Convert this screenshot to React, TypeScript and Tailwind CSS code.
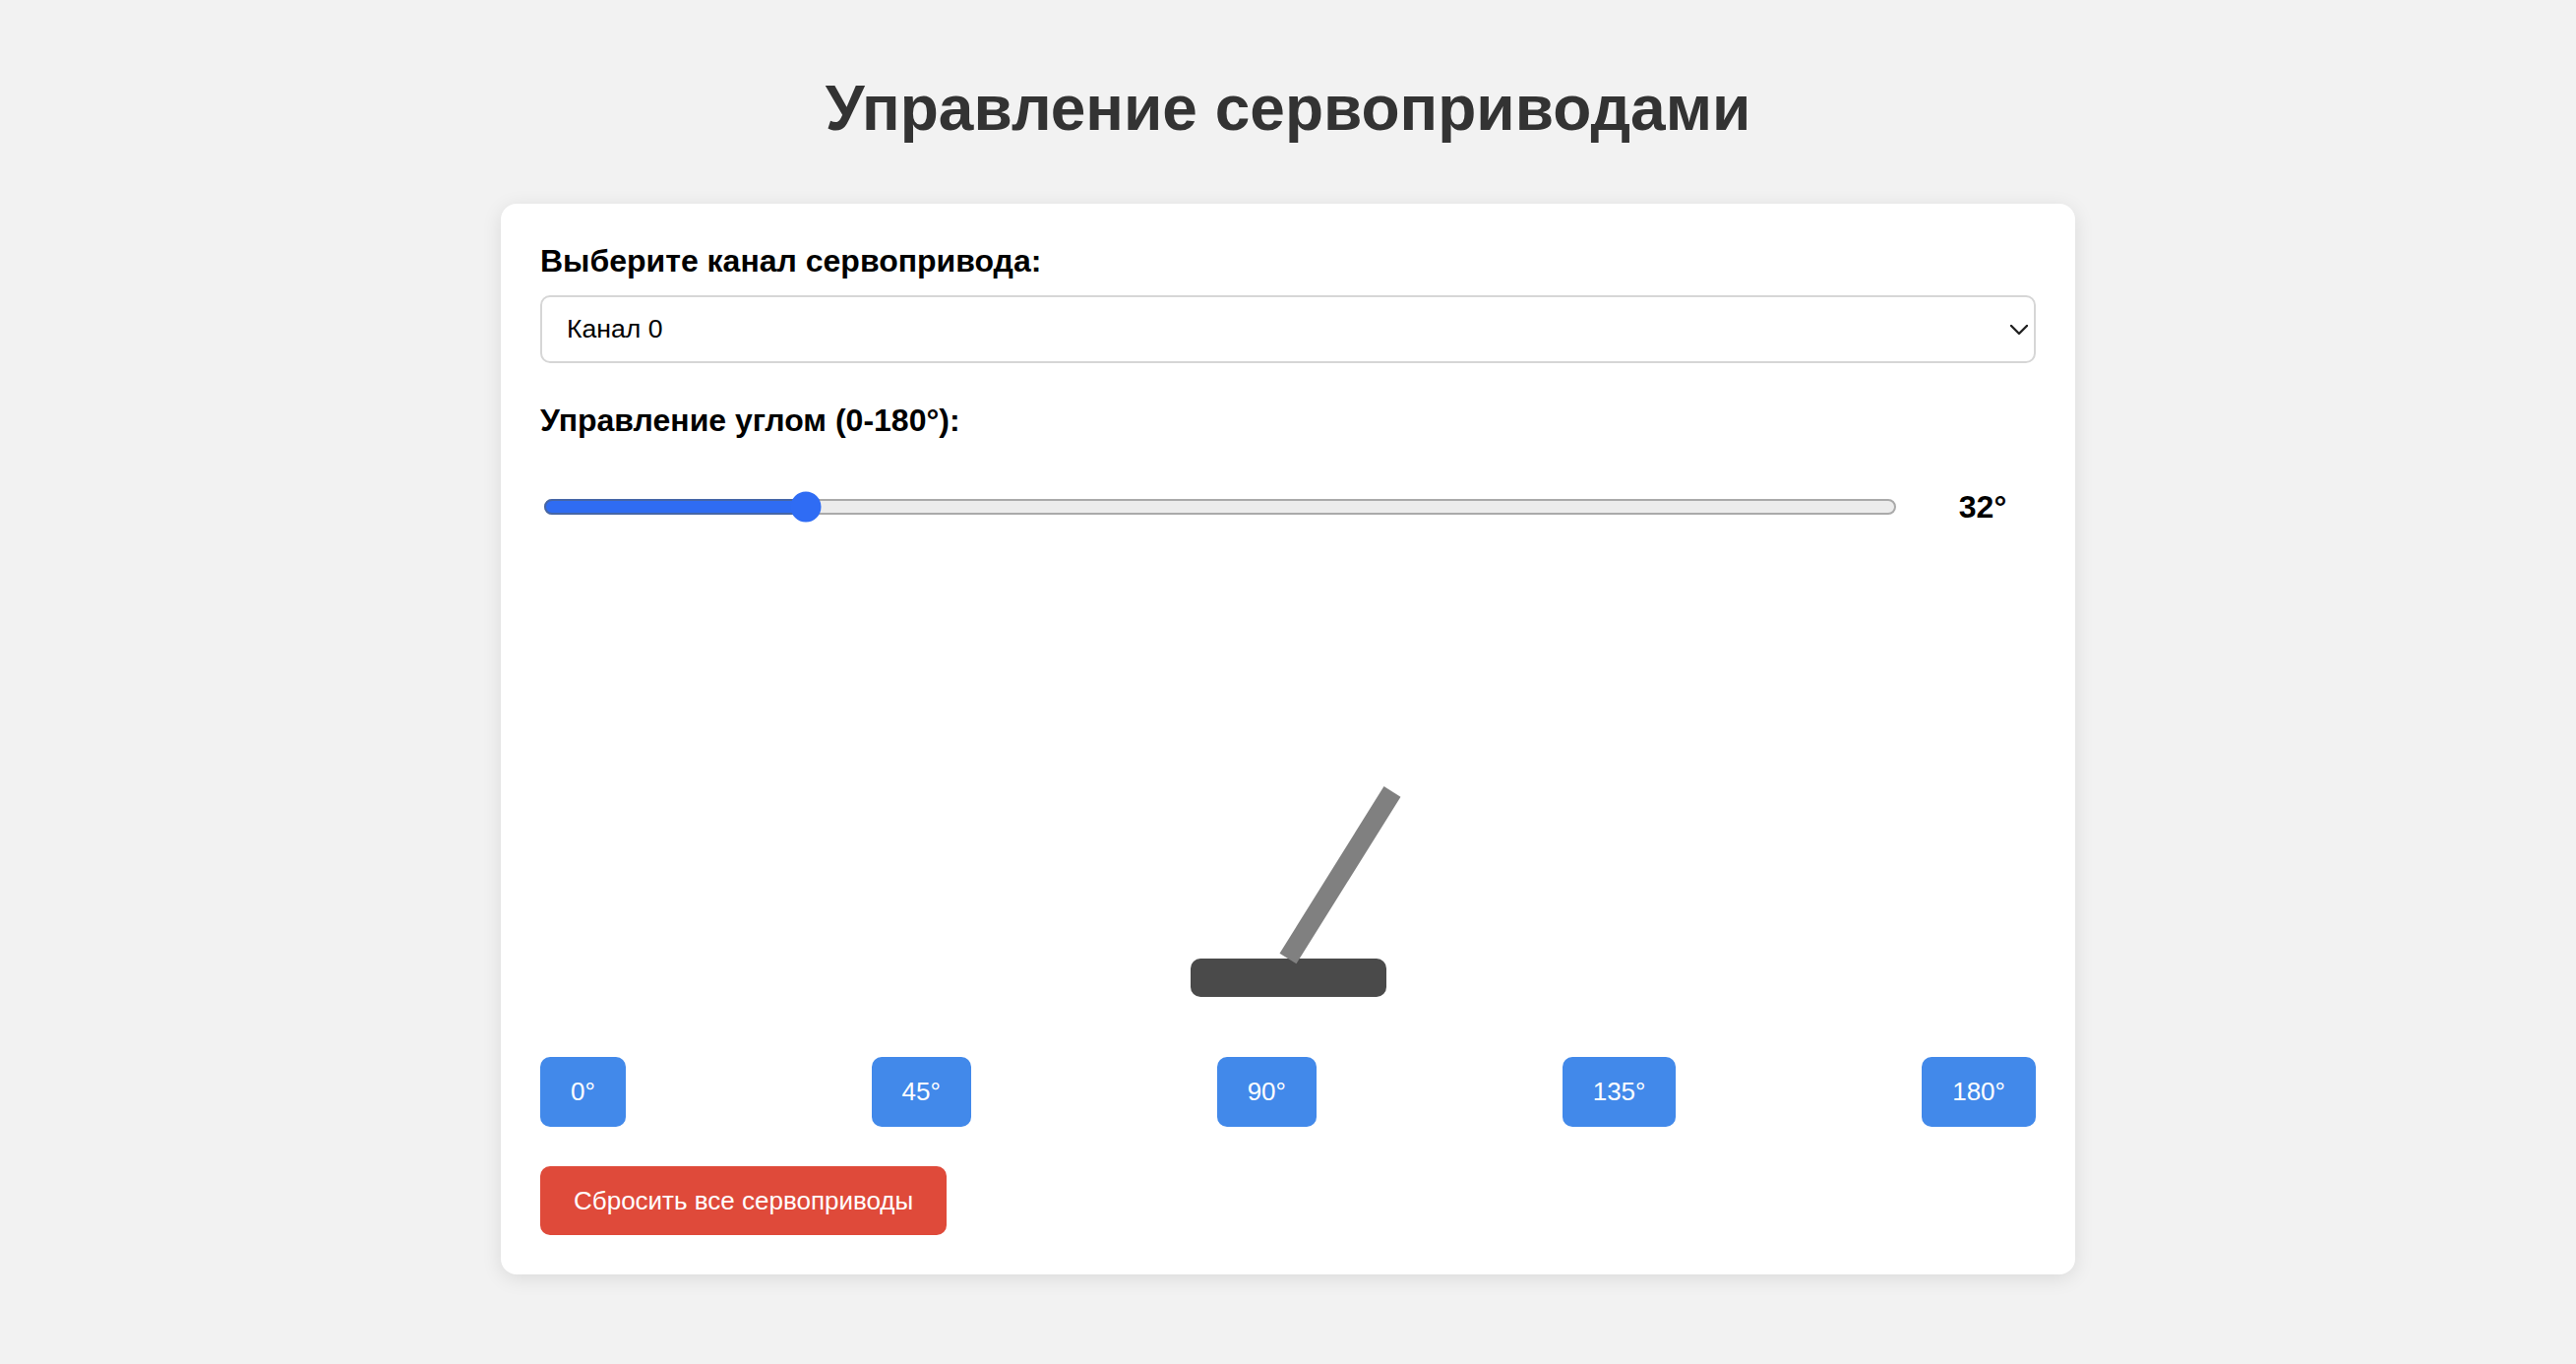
import { useState } from 'react';

const PRESETS = [0, 45, 90, 135, 180];
const TRACK_W = 1373;

export default function App() {
    const [channel, setChannel] = useState('0');
    const [angle, setAngle] = useState(32);

    // thumb centre on the drawn track
    const thumbX = Math.round((angle / 180) * (TRACK_W - 30) + 27);

    return (
        <div className="min-h-screen bg-[#f2f2f2] pt-[73px] pb-[60px] font-['Liberation_Sans',Arial,sans-serif]">
            <h1 className="text-center text-[64px] leading-[74px] font-bold text-[#333]">
                Управление сервоприводами
            </h1>

            <div className="mx-auto mt-[60px] w-[1600px] rounded-[16px] bg-white p-[40px] shadow-[0_4px_20px_rgba(0,0,0,0.1)]">
                <label className="block text-[32px] leading-[37px] font-bold text-black mb-[16px]">
                    Выберите канал сервопривода:
                </label>
                <div className="relative">
                    <select
                        value={channel}
                        onChange={(e) => setChannel(e.target.value)}
                        className="block w-full h-[69px] appearance-none rounded-[10px] border-2 border-[#d6d6d6] bg-white pl-[25px] pr-[40px] text-[26.6px] text-black outline-none"
                    >
                        {Array.from({ length: 16 }, (_, i) => (
                            <option key={i} value={String(i)}>Канал {i}</option>
                        ))}
                    </select>
                    <svg
                        className="pointer-events-none absolute right-[8px] top-[30px]"
                        width="18"
                        height="10"
                        viewBox="0 0 18 10"
                        fill="none"
                    >
                        <path d="M1 1l8 8 8-8" stroke="#222" strokeWidth="2.4" strokeLinecap="round" strokeLinejoin="round" />
                    </svg>
                </div>

                <label className="block mt-[40px] text-[32px] leading-[37px] font-bold text-black mb-[16px]">
                    Управление углом (0-180°):
                </label>
                <div className="flex h-[106px] items-center">
                    <div className="relative ml-[4px] mr-[34px] h-[16px] flex-1 rounded-full border-2 border-[#aaa] bg-[#ececec]">
                        <div
                            className="absolute -left-[2px] -top-[2px] h-[16px] rounded-l-full border-2 border-[#4666a6] bg-[#2f6cf2]"
                            style={{ width: thumbX }}
                        />
                        <div
                            className="absolute top-1/2 h-[31px] w-[31px] -translate-x-1/2 -translate-y-1/2 rounded-full bg-[#2f6cf4]"
                            style={{ left: thumbX - 2 }}
                        />
                        <input
                            type="range"
                            min={0}
                            max={180}
                            value={angle}
                            onChange={(e) => setAngle(Number(e.target.value))}
                            className="absolute inset-0 h-full w-full cursor-pointer opacity-0"
                        />
                    </div>
                    <span className="w-[108px] text-center text-[32px] leading-[37px] font-bold text-black">{angle}°</span>
                </div>

                <div className="flex h-[445px] items-end justify-center">
                    <div className="relative h-[39px] w-[199px] rounded-[10px] bg-[#4a4a4a]">
                        <div
                            className="absolute bottom-full left-1/2 -ml-[10px] h-[200px] w-[20px] origin-bottom bg-[#808080]"
                            style={{ transform: `rotate(${angle}deg)` }}
                        />
                    </div>
                </div>

                <div className="mt-[61px] flex justify-between">
                    {PRESETS.map((p) => (
                        <button
                            key={p}
                            onClick={() => setAngle(p)}
                            className="h-[71px] rounded-[10px] bg-[#4289ea] px-[31px] text-[26px] text-white"
                        >
                            {p}°
                        </button>
                    ))}
                </div>

                <button
                    onClick={() => setAngle(90)}
                    className="mt-[40px] h-[70px] rounded-[10px] bg-[#df4a3a] px-[34px] text-[26px] text-white"
                >
                    Сбросить все сервоприводы
                </button>
            </div>
        </div>
    );
}
